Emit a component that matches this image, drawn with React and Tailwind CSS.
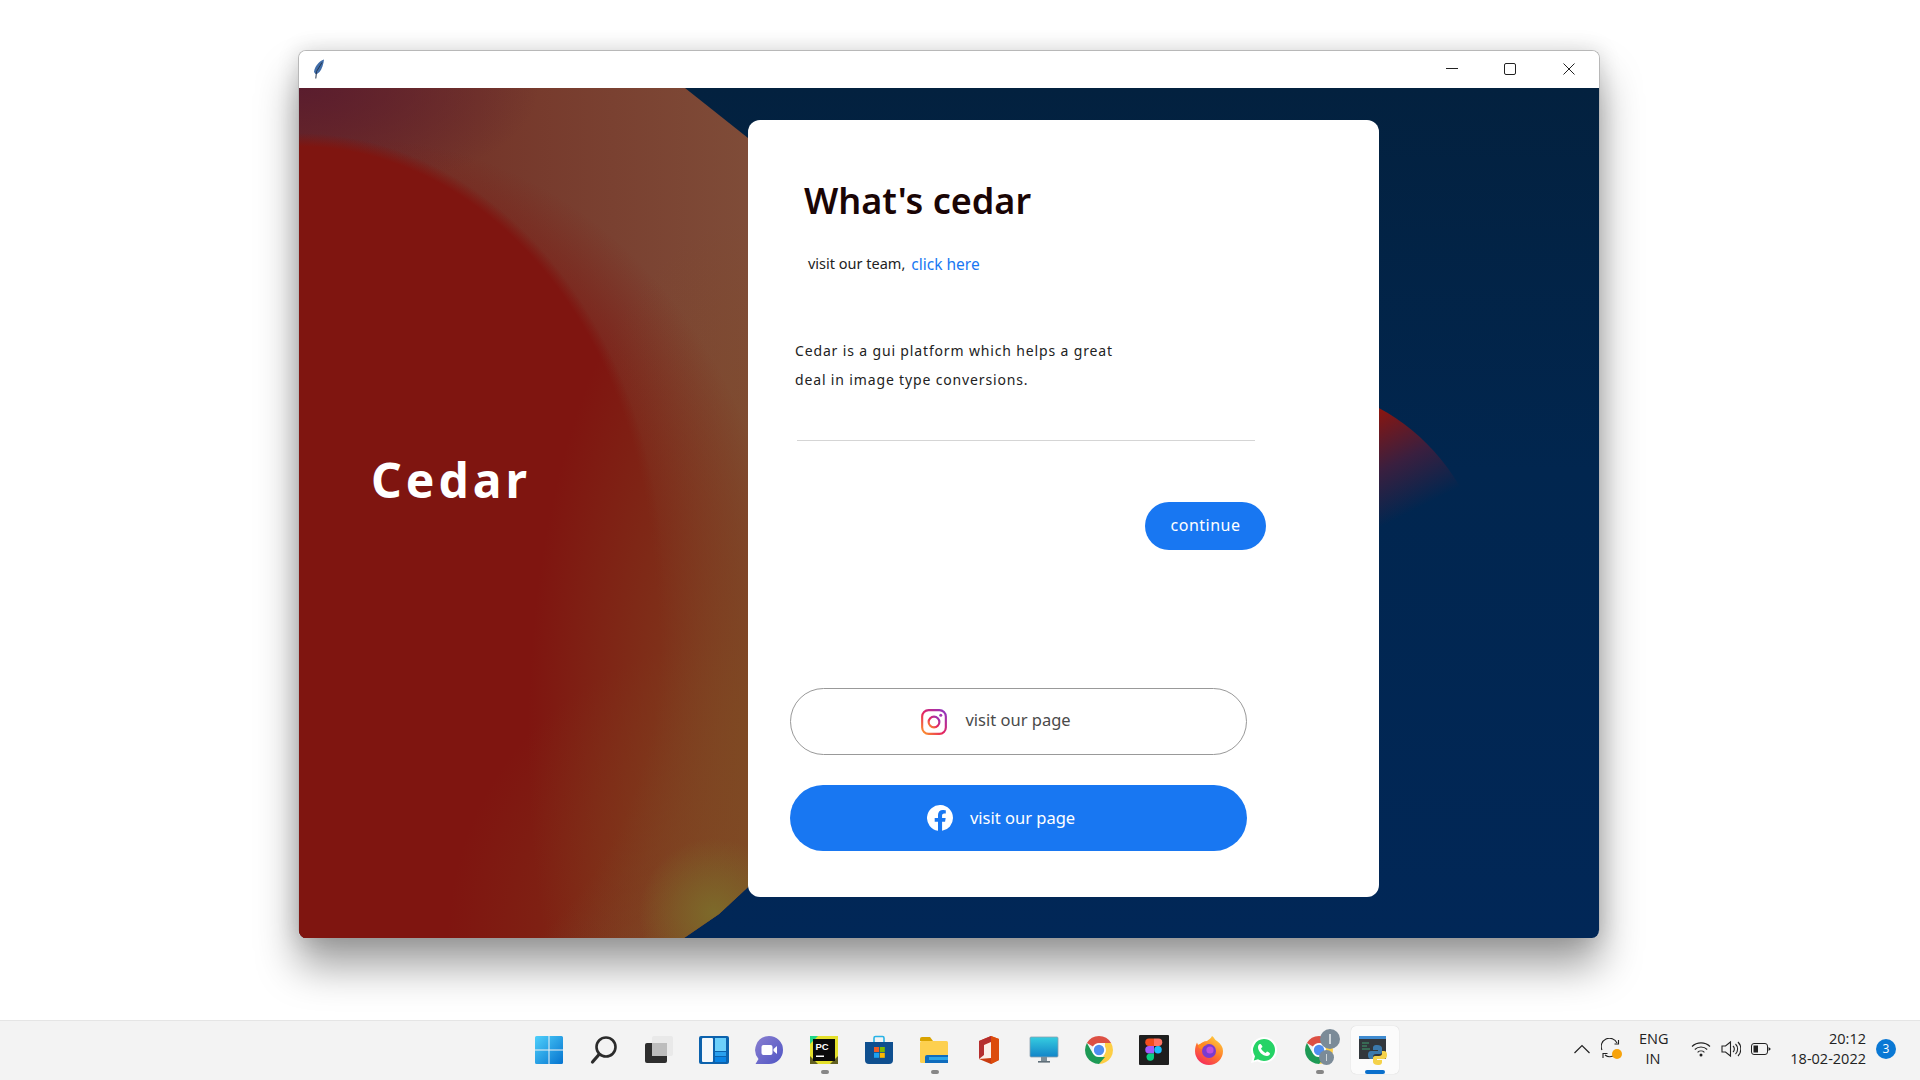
const uiFont = "font-['Noto_Sans',sans-serif]";

function Feather() {
  return (
    <svg width="12" height="20" viewBox="0 0 12 20">
      <path d="M11 0.500C7.500 1.500 3 5.500 1.500 10.500L1 13 2.500 15C3.500 15.500 5 14.500 6.500 13C9 10 10.500 5 11 0.500Z" fill="#3f6ca8" />
      <path d="M9 3.500L3.500 12.500 2.800 19.500" stroke="#27364d" strokeWidth="1" fill="none" />
    </svg>
  );
}

function WindowControls() {
  return (
    <div className="flex items-center h-full ml-auto">
      <svg width="14" height="14" viewBox="0 0 14 14" className="mr-[44px]">
        <path d="M1 6.500H13" stroke="#222" strokeWidth="1" />
      </svg>
      <svg width="14" height="14" viewBox="0 0 14 14" className="mr-[45px]">
        <rect x="1.500" y="1.500" width="11" height="11" rx="1.500" stroke="#222" strokeWidth="1" fill="none" />
      </svg>
      <svg width="14" height="14" viewBox="0 0 14 14" className="mr-[23px]">
        <path d="M1.500 1.500L12.500 12.500M12.500 1.500L1.500 12.500" stroke="#222" strokeWidth="1" />
      </svg>
    </div>
  );
}

function InstagramIcon() {
  return (
    <svg width="28" height="28" viewBox="0 0 26 26">
      <defs>
        <linearGradient id="ig" x1="0" y1="1" x2="1" y2="0">
          <stop offset="0" stopColor="#fd9a2a" />
          <stop offset="0.45" stopColor="#e6245f" />
          <stop offset="1" stopColor="#8a36c8" />
        </linearGradient>
      </defs>
      <rect x="2" y="2" width="22" height="22" rx="6" stroke="url(#ig)" strokeWidth="2" fill="none" />
      <circle cx="13" cy="13" r="5" stroke="url(#ig)" strokeWidth="2" fill="none" />
      <circle cx="19.300" cy="6.800" r="1.400" fill="#a936b4" />
    </svg>
  );
}

function FacebookIcon() {
  return (
    <svg width="26" height="26" viewBox="0 0 26 26">
      <path
        d="M26 13a13 13 0 1 0-15 12.85V16.8H7.700V13H11v-2.900c0-3.250 1.940-5.050 4.900-5.050 1.420 0 2.900.250 2.900.250v3.200h-1.630c-1.600 0-2.100 1-2.100 2V13h3.580l-.570 3.800h-3v9.050A13 13 0 0 0 26 13Z"
        fill="#fff"
      />
    </svg>
  );
}

function StartIcon() {
  return (
    <svg width="30" height="30" viewBox="0 0 30 30">
      <defs>
        <linearGradient id="st" x1="0" y1="0" x2="1" y2="1">
          <stop offset="0" stopColor="#4fd0fb" />
          <stop offset="1" stopColor="#0573cf" />
        </linearGradient>
      </defs>
      <path d="M1 2.500A1.500 1.500 0 0 1 2.500 1H14.500V14.500H1Z M15.500 1H27.500A1.500 1.500 0 0 1 29 2.500V14.500H15.500Z M1 15.500H14.500V29H2.500A1.500 1.500 0 0 1 1 27.500Z M15.500 15.500H29V27.500A1.500 1.500 0 0 1 27.500 29H15.500Z" fill="url(#st)" />
    </svg>
  );
}

function SearchIcon() {
  return (
    <svg width="30" height="30" viewBox="0 0 30 30">
      <circle cx="17" cy="12" r="9.500" stroke="#2b2b2b" strokeWidth="2.600" fill="none" />
      <path d="M10 19.500L3.500 27" stroke="#2b2b2b" strokeWidth="3.200" strokeLinecap="round" />
    </svg>
  );
}

function TaskViewIcon() {
  return (
    <svg width="30" height="30" viewBox="0 0 30 30">
      <rect x="1" y="8" width="22" height="20" rx="2" fill="#2e2e2e" />
      <rect x="8" y="1" width="21" height="20" rx="2" fill="#e9e9e9" />
      <rect x="8" y="8" width="15" height="13" fill="#bdbdbd" />
    </svg>
  );
}

function WidgetsIcon() {
  return (
    <svg width="30" height="30" viewBox="0 0 30 30">
      <rect x="0" y="1" width="30" height="28" rx="2" fill="#0c62ad" />
      <rect x="3" y="3" width="11" height="24" rx="1" fill="#f4f8fb" />
      <rect x="16" y="3" width="11" height="13" fill="#6dd0fb" />
      <rect x="16" y="17" width="11" height="4" fill="#2aa0ee" />
      <rect x="16" y="22" width="11" height="5" fill="#0a84e4" />
    </svg>
  );
}

function ChatIcon() {
  return (
    <svg width="30" height="30" viewBox="0 0 30 30">
      <defs>
        <linearGradient id="ch" x1="0" y1="0" x2="1" y2="1">
          <stop offset="0" stopColor="#8a7fd0" />
          <stop offset="1" stopColor="#4f55c4" />
        </linearGradient>
      </defs>
      <path d="M15 1A14 14 0 0 1 15 29H1.500L4.500 24A14 14 0 0 1 15 1Z" fill="url(#ch)" />
      <rect x="7.500" y="10" width="11" height="10" rx="2" fill="#fff" />
      <path d="M19.500 14L23 11V19L19.500 16Z" fill="#fff" />
    </svg>
  );
}

function PyCharmIcon() {
  return (
    <svg width="28" height="28" viewBox="0 0 28 28">
      <rect x="0" y="0" width="28" height="28" fill="#e4e02c" />
      <path d="M0 0H8L0 8Z" fill="#21d789" />
      <path d="M0 20L8 28H0Z M28 20L20 28H28Z" fill="#1b1b1b" opacity="0.65" />
      <rect x="3" y="3" width="22" height="22" fill="#0a0a0a" />
      <text x="5.500" y="13.500" fontSize="9.500" fontWeight="700" fill="#fff" fontFamily="'Liberation Sans',sans-serif">PC</text>
      <rect x="6" y="19.500" width="8" height="1.500" fill="#fff" />
    </svg>
  );
}

function StoreIcon() {
  return (
    <svg width="30" height="30" viewBox="0 0 30 30">
      <path d="M10 7V3A1.500 1.500 0 0 1 11.500 1.500H18.500A1.500 1.500 0 0 1 20 3V7" stroke="#28b3e6" strokeWidth="1.600" fill="none" />
      <path d="M1 7H29V25A4 4 0 0 1 25 29H5A4 4 0 0 1 1 25Z" fill="#0f4f8f" />
      <rect x="10" y="12" width="5" height="5" fill="#ef5b25" />
      <rect x="15.800" y="12" width="5" height="5" fill="#7fba00" />
      <rect x="10" y="17.800" width="5" height="5" fill="#1ba1f1" />
      <rect x="15.800" y="17.800" width="5" height="5" fill="#fdb900" />
    </svg>
  );
}

function ExplorerIcon() {
  return (
    <svg width="30" height="30" viewBox="0 0 30 30">
      <path d="M1 4A2 2 0 0 1 3 2H11L14 6H1Z" fill="#d9a300" />
      <rect x="1" y="6" width="28" height="22" rx="1.500" fill="#fdd04f" />
      <path d="M6 22A2 2 0 0 1 8 20H29V28H6Z" fill="#0f6cbd" />
      <rect x="10" y="22" width="19" height="3" fill="#2aa5e8" />
    </svg>
  );
}

function OfficeIcon() {
  return (
    <svg width="24" height="30" viewBox="0 0 24 30">
      <defs>
        <linearGradient id="of" x1="0" y1="0" x2="0" y2="1">
          <stop offset="0" stopColor="#e0440e" />
          <stop offset="1" stopColor="#c63a10" />
        </linearGradient>
      </defs>
      <path d="M2 6L14 1L22 4V25L14 29L2 24Z" fill="url(#of)" />
      <path d="M2 6L14 1V7L7 10V20L2 24Z" fill="#b52e2e" />
      <path d="M7 10L14 7V23L2 24L7 20Z" fill="#fbeee8" />
      <path d="M14 1L22 4V25L14 29Z" fill="#dc4c0c" />
    </svg>
  );
}

function MonitorIcon() {
  return (
    <svg width="30" height="28" viewBox="0 0 30 28">
      <defs>
        <linearGradient id="mo" x1="0" y1="0" x2="0" y2="1">
          <stop offset="0" stopColor="#36cde0" />
          <stop offset="1" stopColor="#1284c8" />
        </linearGradient>
      </defs>
      <rect x="1" y="1" width="28" height="20" rx="1" fill="url(#mo)" stroke="#8aa0ad" strokeWidth="0.800" />
      <rect x="12" y="21" width="6" height="4" fill="#7f8f99" />
      <rect x="9" y="25" width="12" height="1.600" fill="#5f6e78" />
    </svg>
  );
}

function ChromeIcon({ size = 28 }) {
  return (
    <svg width={size} height={size} viewBox="0 0 28 28">
      <path d="M14 0A14 14 0 0 1 26.100 7H14A7 7 0 0 0 7.900 10.500L1.900 7A14 14 0 0 1 14 0Z" fill="#dd5044" />
      <path d="M26.100 7A14 14 0 0 1 14 28L20 17.500A7 7 0 0 0 20 10.500L20 7Z" fill="#fdce45" />
      <path d="M1.900 7L7.900 17.500A7 7 0 0 0 14 21H20L14 28A14 14 0 0 1 1.900 7Z" fill="#1d9a55" />
      <circle cx="14" cy="14" r="6.600" fill="#fff" />
      <circle cx="14" cy="14" r="5.200" fill="#4f8ef0" />
    </svg>
  );
}

function FigmaIcon() {
  return (
    <svg width="30" height="30" viewBox="0 0 30 30">
      <rect width="30" height="30" rx="1" fill="#1e1e1e" />
      <path d="M10 3.500H15V11H10A3.750 3.750 0 0 1 10 3.500Z" fill="#f24e1e" />
      <path d="M15 3.500H19.500A3.750 3.750 0 0 1 19.500 11H15Z" fill="#ff7262" />
      <path d="M10 11H15V18.500H10A3.750 3.750 0 0 1 10 11Z" fill="#a259ff" />
      <circle cx="19" cy="14.750" r="3.750" fill="#1abcfe" />
      <path d="M10 18.500H15V22.200A3.750 3.750 0 1 1 10 18.500Z" fill="#0acf83" />
    </svg>
  );
}

function FirefoxIcon() {
  return (
    <svg width="30" height="30" viewBox="0 0 30 30">
      <defs>
        <linearGradient id="ff" x1="0.800" y1="0" x2="0.200" y2="1">
          <stop offset="0" stopColor="#ffd23c" />
          <stop offset="0.500" stopColor="#ff7a2a" />
          <stop offset="1" stopColor="#f5245f" />
        </linearGradient>
      </defs>
      <path d="M18 1C21 3 20.500 5 23 6C27 9 29 12 29 16A14 14 0 0 1 1 16C1 12.500 2 9.500 3 7.500C3.500 9 4 10 5 10.500C7 7.500 10 6 13 6C14.500 4.500 17 4 18 1Z" fill="url(#ff)" />
      <circle cx="15" cy="16" r="7" fill="#7a3bcf" />
      <circle cx="16" cy="15" r="3.600" fill="#c04ddb" />
      <path d="M4 10C7 8 11 8 13 10C10 10.500 8.500 12 8 14C6 14 4 12.500 4 10Z" fill="#ff8a1f" />
    </svg>
  );
}

function WhatsappIcon() {
  return (
    <svg width="28" height="28" viewBox="0 0 28 28">
      <path d="M14 1A13 13 0 0 1 14 27C11.500 27 9.500 26.400 7.500 25.300L1 27L2.800 20.700A13 13 0 0 1 14 1Z" fill="#fff" />
      <path d="M14 3A11 11 0 0 1 14 25C12 25 10 24.400 8 23.300L3.800 24.400L5 20.200A11 11 0 0 1 14 3Z" fill="#25d366" />
      <path d="M10 8C9 8 8 9.500 8 11C8 15.500 12.500 20 17 20C18.500 20 20 19 20 17.500C20 17 17.500 15.500 17 15.500L15.700 17C14 16.500 11.500 14 11 12.300L12.500 11C12.500 10.500 11 8 10.500 8Z" fill="#fff" />
    </svg>
  );
}

function ChromeBadgedIcon() {
  return (
    <div className="relative w-[28px] h-[28px]">
      <ChromeIcon />
      <span className="absolute left-[15px] top-[-7px] w-[20px] h-[20px] rounded-full bg-[#7b8b98] flex items-center justify-center">
        <span className="w-[2px] h-[10px] bg-[#cfd6db]" />
      </span>
      <span className="absolute left-[14px] top-[14px] w-[15px] h-[15px] rounded-full bg-[#7b8b98] flex items-center justify-center">
        <span className="w-[1.500px] h-[7px] bg-[#cfd6db]" />
      </span>
    </div>
  );
}

function PythonTermIcon() {
  return (
    <svg width="30" height="30" viewBox="0 0 30 30">
      <rect x="0" y="1" width="27" height="23" fill="#32373c" />
      <rect x="0" y="1" width="27" height="3" fill="#3f8bd0" />
      <path d="M3 8H10M3 11H8M3 14H11" stroke="#3f9f6f" strokeWidth="1" />
      <path d="M18 10C14.500 10 14 11.500 14 13V15H19V16H12C10 16 9 17.500 9 20C9 22.500 10 24 12 24H14V21.500C14 20 15 19 17 19H21C22.500 19 23 18 23 17V13C23 11.500 21.500 10 18 10Z" fill="#3b79ac" />
      <path d="M19 30C22.500 30 23 28.500 23 27V25H18V24H25C27 24 28 22.500 28 20C28 17.500 27 16 25 16H23V18.500C23 20 22 21 20 21H16C14.500 21 14 22 14 23V27C14 28.500 15.500 30 19 30Z" fill="#f5d24a" />
    </svg>
  );
}

const taskbarItems = [
  { id: "start", icon: <StartIcon /> },
  { id: "search", icon: <SearchIcon /> },
  { id: "taskview", icon: <TaskViewIcon /> },
  { id: "widgets", icon: <WidgetsIcon /> },
  { id: "chat", icon: <ChatIcon /> },
  { id: "pycharm", icon: <PyCharmIcon />, running: true },
  { id: "store", icon: <StoreIcon /> },
  { id: "explorer", icon: <ExplorerIcon />, running: true },
  { id: "office", icon: <OfficeIcon /> },
  { id: "monitor", icon: <MonitorIcon /> },
  { id: "chrome", icon: <ChromeIcon /> },
  { id: "figma", icon: <FigmaIcon /> },
  { id: "firefox", icon: <FirefoxIcon /> },
  { id: "whatsapp", icon: <WhatsappIcon /> },
  { id: "chrome2", icon: <ChromeBadgedIcon />, running: true },
  { id: "python", icon: <PythonTermIcon />, active: true },
];

function Tray() {
  return (
    <div className="flex items-center justify-end pr-[24px] pb-[3px] text-[14.500px] leading-[20px] text-[#222] font-['Open_Sans',sans-serif]">
      <svg width="16" height="10" viewBox="0 0 16 10">
        <path d="M0.500 9L8 1.500L15.500 9" stroke="#222" strokeWidth="1.200" fill="none" />
      </svg>
      <svg width="22" height="22" viewBox="0 0 22 22" className="ml-[11px]">
        <path d="M1 12A8 8 0 0 1 16 5" stroke="#222" strokeWidth="1.100" fill="none" />
        <path d="M17.500 2V6H13.500" stroke="#222" strokeWidth="1.100" fill="none" />
        <path d="M12 18A8 8 0 0 1 4 17" stroke="#222" strokeWidth="1.100" fill="none" />
        <path d="M2 20V15.500H6.500" stroke="#222" strokeWidth="1.100" fill="none" />
        <circle cx="16" cy="16" r="5" fill="#f7a30c" />
      </svg>
      <div className="ml-[16px] w-[28px] text-center">
        <div>ENG</div>
        <div>IN</div>
      </div>
      <svg width="20" height="16" viewBox="0 0 20 16" className="ml-[24px]">
        <path d="M1 5.500A13 13 0 0 1 19 5.500M3.800 8.500A9 9 0 0 1 16.200 8.500M6.600 11.300A5 5 0 0 1 13.400 11.300" stroke="#222" strokeWidth="1.100" fill="none" />
        <circle cx="10" cy="14" r="1.500" fill="#222" />
      </svg>
      <svg width="20" height="18" viewBox="0 0 20 18" className="ml-[10px]">
        <path d="M1 6H4.500L9.500 2V16L4.500 12H1Z" stroke="#222" strokeWidth="1.100" fill="none" />
        <path d="M12 6A4 4 0 0 1 12 12M14.500 4A7 7 0 0 1 14.500 14M17 2A10 10 0 0 1 17 16" stroke="#222" strokeWidth="1.100" fill="none" />
      </svg>
      <svg width="20" height="12" viewBox="0 0 20 12" className="ml-[10px]">
        <rect x="0.500" y="0.500" width="16" height="11" rx="2.500" stroke="#222" strokeWidth="1" fill="none" />
        <rect x="2.500" y="2.500" width="4.500" height="7" fill="#222" />
        <path d="M17.500 4V8L19.500 6.500V5.500Z" fill="#222" />
      </svg>
      <div className="ml-[17px] w-[78px] text-right whitespace-nowrap">
        <div>20:12</div>
        <div>18-02-2022</div>
      </div>
      <span className="ml-[10px] w-[20px] h-[20px] rounded-full bg-[#0a78d4] text-white text-[12px] flex items-center justify-center">
        3
      </span>
    </div>
  );
}

export default function App() {
  return (
    <div className={`w-[1920px] h-[1080px] overflow-hidden flex flex-col bg-white ${uiFont}`}>
      {/* window */}
      <div className="flex-1 pl-[298px] pt-[50px]">
        <div className="w-[1302px] h-[888px] rounded-[8px] border border-[#b8b8b8] border-b-0 overflow-hidden flex flex-col shadow-[0_28px_42px_rgba(0,0,0,0.38),0_0_22px_rgba(0,0,0,0.14)]">
          <div className="h-[37px] bg-white flex items-center pl-[14px] pb-[2px] shrink-0">
            <Feather />
            <WindowControls />
          </div>

          <div className="relative flex-1 flex bg-[linear-gradient(180deg,#03213f_0%,#01264f_45%,#012757_100%)]">
            {/* right blob */}
            <div className="absolute left-[773px] top-[295px] w-[416px] h-[416px] rounded-full bg-[linear-gradient(153deg,#8a1610_29%,#3a1f3f_39%,rgba(1,38,80,0)_48%)]" />

            {/* left panel */}
            <div className="w-[449px] h-full shrink-0 pl-[72px] pt-[360px] [clip-path:polygon(0_0,386px_0,449px_50px,449px_799px,420px_826px,385px_850px,0_850px)] bg-[radial-gradient(ellipse_75px_75px_at_415px_825px,#7d6a2a_0%,rgba(125,106,42,0)_100%),radial-gradient(ellipse_220px_520px_at_449px_650px,rgba(127,74,34,0.9)_0%,rgba(127,74,34,0)_100%),radial-gradient(ellipse_300px_300px_at_449px_850px,rgba(127,74,30,0.7)_0%,rgba(127,74,30,0)_100%),radial-gradient(ellipse_365px_460px_at_0px_505px,#7f1510_0%,#7f1510_97%,rgba(127,21,16,0)_100%),radial-gradient(ellipse_430px_510px_at_60px_560px,#7f1510_70%,rgba(127,21,16,0)_100%),radial-gradient(ellipse_240px_110px_at_0px_0px,#5a1d2e_0%,rgba(90,29,46,0)_100%),linear-gradient(90deg,#6e2a26_0%,#75362a_40%,#7f4c38_100%)]">
              <h1 className="text-[48px] leading-[64px] font-bold tracking-[4px] text-white">Cedar</h1>
            </div>

            {/* card */}
            <div className="relative mt-[32px] w-[631px] h-[777px] bg-white rounded-[12px] flex flex-col">
              <h2 className="ml-[56px] mt-[56px] text-[36px] leading-[50px] font-semibold text-[#1a0505]">
                What's cedar
              </h2>
              <div className="ml-[60px] mt-[26px] flex items-baseline h-[24px] text-[14.500px]">
                <span className="text-[#222]">visit our team,</span>
                <span className="ml-[6px] text-[15.500px] text-[#1877f2] translate-y-px">click here</span>
              </div>
              <p className="ml-[47px] mt-[60px] text-[14px] leading-[29px] tracking-[0.850px] text-[#222]">
                Cedar is a gui platform which helps a great
                <br />
                deal in image type conversions.
              </p>
              <div className="ml-[49px] mt-[46px] w-[458px] h-px bg-[#d5d5d5]" />
              <button className="ml-[397px] mt-[61px] w-[121px] h-[48px] pb-[2px] rounded-full bg-[#1877f2] text-white text-[16px] tracking-[0.500px]">
                continue
              </button>
              <button className="ml-[42px] mt-[138px] w-[457px] h-[67px] pr-[46px] rounded-full border border-[#999] flex items-center justify-center gap-[17px] text-[#4a4a4a] text-[16.500px]">
                <InstagramIcon />
                <span className="pb-[2px]">visit our page</span>
              </button>
              <button className="ml-[42px] mt-[30px] w-[457px] h-[66px] pr-[35px] rounded-full bg-[#1877f2] flex items-center justify-center gap-[17px] text-white text-[16.500px]">
                <FacebookIcon />
                <span>visit our page</span>
              </button>
            </div>
          </div>
        </div>
      </div>

      {/* taskbar */}
      <div className="h-[60px] shrink-0 bg-[#f3f3f3] border-t border-[#e5e5e5] grid grid-cols-[1fr_auto_1fr] items-center">
        <div />
        <div className="flex h-full pl-[3px]">
          {taskbarItems.map((item) => (
            <div key={item.id} className="relative w-[55px] h-full pb-[2px] flex items-center justify-center">
              {item.active && (
                <span className="absolute left-[4px] top-[5px] w-[48px] h-[48px] rounded-[5px] bg-[#fbfbfb] shadow-[0_0_1px_rgba(0,0,0,0.2)]" />
              )}
              <span className="relative">{item.icon}</span>
              {item.running && (
                <span className="absolute left-[24px] bottom-[6px] w-[8px] h-[4px] rounded-full bg-[#868686]" />
              )}
              {item.active && (
                <span className="absolute left-[18px] bottom-[6px] w-[20px] h-[4px] rounded-full bg-[#0a6fcc]" />
              )}
            </div>
          ))}
        </div>
        <Tray />
      </div>
    </div>
  );
}
